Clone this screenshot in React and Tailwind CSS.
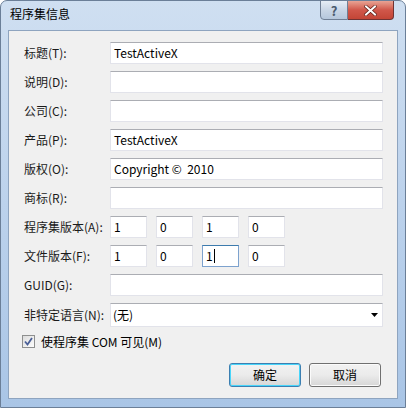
import React from "react";

const font = { fontFamily: '"Noto Sans CJK SC", "Noto Sans", sans-serif' };

const TextBox = ({ value = "", className = "" }) => (
  <div
    className={`h-[22px] bg-white border border-[#e2e3ea] border-t-[#abadb3] flex items-center pl-[3px] text-[12px] text-black whitespace-pre ${className}`}
  >
    {value}
  </div>
);

const VersionBox = ({ value, focused }) => (
  <div
    className={`w-[37px] h-[22px] bg-white border flex items-center pl-[3px] text-[12px] text-black ${
      focused
        ? "border-[#7da2ce] border-t-[#3d7bad]"
        : "border-[#e2e3ea] border-t-[#abadb3]"
    }`}
  >
    {value}
    {focused && <span className="w-px h-[14px] bg-black ml-[1px]" />}
  </div>
);

const Row = ({ label, children }) => (
  <div className="flex items-center">
    <div className="w-[86px] shrink-0 text-[12px] text-[#1a1a1a] leading-none">{label}</div>
    <div className="flex-1">{children}</div>
  </div>
);

const Button = ({ children, primary }) => (
  <button
    className={`w-[72px] h-[24px] rounded-[3px] border text-[12px] text-black bg-gradient-to-b from-[#f2f2f2] via-[#ebebeb] to-[#d6d6d6] ${
      primary
        ? "border-[#3c7fb1] shadow-[inset_0_0_0_1px_#48d5fa]"
        : "border-[#707070] shadow-[inset_0_0_0_1px_#fbfbfb]"
    }`}
  >
    {children}
  </button>
);

export default function App() {
  return (
    <div className="w-[406px] h-[408px] bg-white" style={font}>
      <div className="w-[406px] h-[408px] rounded-t-[7px] border border-[#6b7f98] bg-gradient-to-b from-[#cfdff1] via-[#bcd2ec] to-[#a9c5e6] flex flex-col overflow-hidden">
        {/* Title bar */}
        <div className="h-[29px] shrink-0 flex items-start relative">
          <div className="pl-[9px] pt-[5px] text-[12px] text-black leading-[16px]">程序集信息</div>
          <div className="absolute top-[-1px] right-[11px] flex">
            <div className="w-[28px] h-[20px] rounded-bl-[4px] border border-[#6f7f95] bg-gradient-to-b from-[#e6edf6] via-[#c9d6e6] to-[#b5c7dc] flex items-center justify-center text-[13px] font-bold text-[#4b5a6e] leading-none">
              ?
            </div>
            <div className="w-[46px] h-[20px] rounded-br-[4px] border border-l-0 border-[#6f3333] bg-gradient-to-b from-[#e8a394] via-[#d0574a] to-[#c34536] flex items-center justify-center">
              <svg width="13" height="11" viewBox="0 0 13 11">
                <path d="M2 1.5 L11 9.5 M11 1.5 L2 9.5" stroke="#5b1d15" strokeWidth="3.4" strokeLinecap="square" />
                <path d="M2 1.5 L11 9.5 M11 1.5 L2 9.5" stroke="#ffffff" strokeWidth="2" strokeLinecap="square" />
              </svg>
            </div>
          </div>
        </div>

        {/* Client area */}
        <div className="mx-[7px] h-[369px] shrink-0 border border-[#8ea4bf] bg-[#f0f0f0] pl-[15px] pr-[14px] pt-[11px] flex flex-col">
          <div className="flex flex-col gap-[7px]">
            <Row label="标题(T):"><TextBox value="TestActiveX" /></Row>
            <Row label="说明(D):"><TextBox /></Row>
            <Row label="公司(C):"><TextBox /></Row>
            <Row label="产品(P):"><TextBox value="TestActiveX" /></Row>
            <Row label="版权(O):"><TextBox value="Copyright ©  2010" /></Row>
            <Row label="商标(R):"><TextBox /></Row>
            <Row label="程序集版本(A):">
              <div className="flex gap-[9px]">
                <VersionBox value="1" />
                <VersionBox value="0" />
                <VersionBox value="1" />
                <VersionBox value="0" />
              </div>
            </Row>
            <Row label="文件版本(F):">
              <div className="flex gap-[9px]">
                <VersionBox value="1" />
                <VersionBox value="0" />
                <VersionBox value="1" focused />
                <VersionBox value="0" />
              </div>
            </Row>
            <Row label="GUID(G):"><TextBox /></Row>
            <Row label="非特定语言(N):">
              <div className="h-[24px] bg-white border border-[#e2e3ea] border-t-[#abadb3] flex items-center pl-[2px] pr-[4px] text-[12px] text-black">
                <span className="flex-1">(无)</span>
                <svg width="7" height="4" viewBox="0 0 7 4">
                  <path d="M0 0 H7 L3.5 4 Z" fill="#000" />
                </svg>
              </div>
            </Row>
          </div>

          <div className="flex items-center mt-[8px] ml-[-2px] h-[13px]">
            <div className="w-[13px] h-[13px] border border-[#8e8f8f] bg-gradient-to-br from-[#dcdcdc] to-[#fdfdfd] flex items-center justify-center">
              <svg width="9" height="9" viewBox="0 0 9 9">
                <path d="M1 4.5 L3.5 7.5 L8 1" stroke="#4a5f97" strokeWidth="1.8" fill="none" />
              </svg>
            </div>
            <span className="ml-[6px] text-[12px] text-black leading-none">使程序集 COM 可见(M)</span>
          </div>

          <div className="flex justify-end gap-[8px] mt-[15px] pr-[2px]">
            <Button primary>确定</Button>
            <Button>取消</Button>
          </div>
        </div>
      </div>
    </div>
  );
}
